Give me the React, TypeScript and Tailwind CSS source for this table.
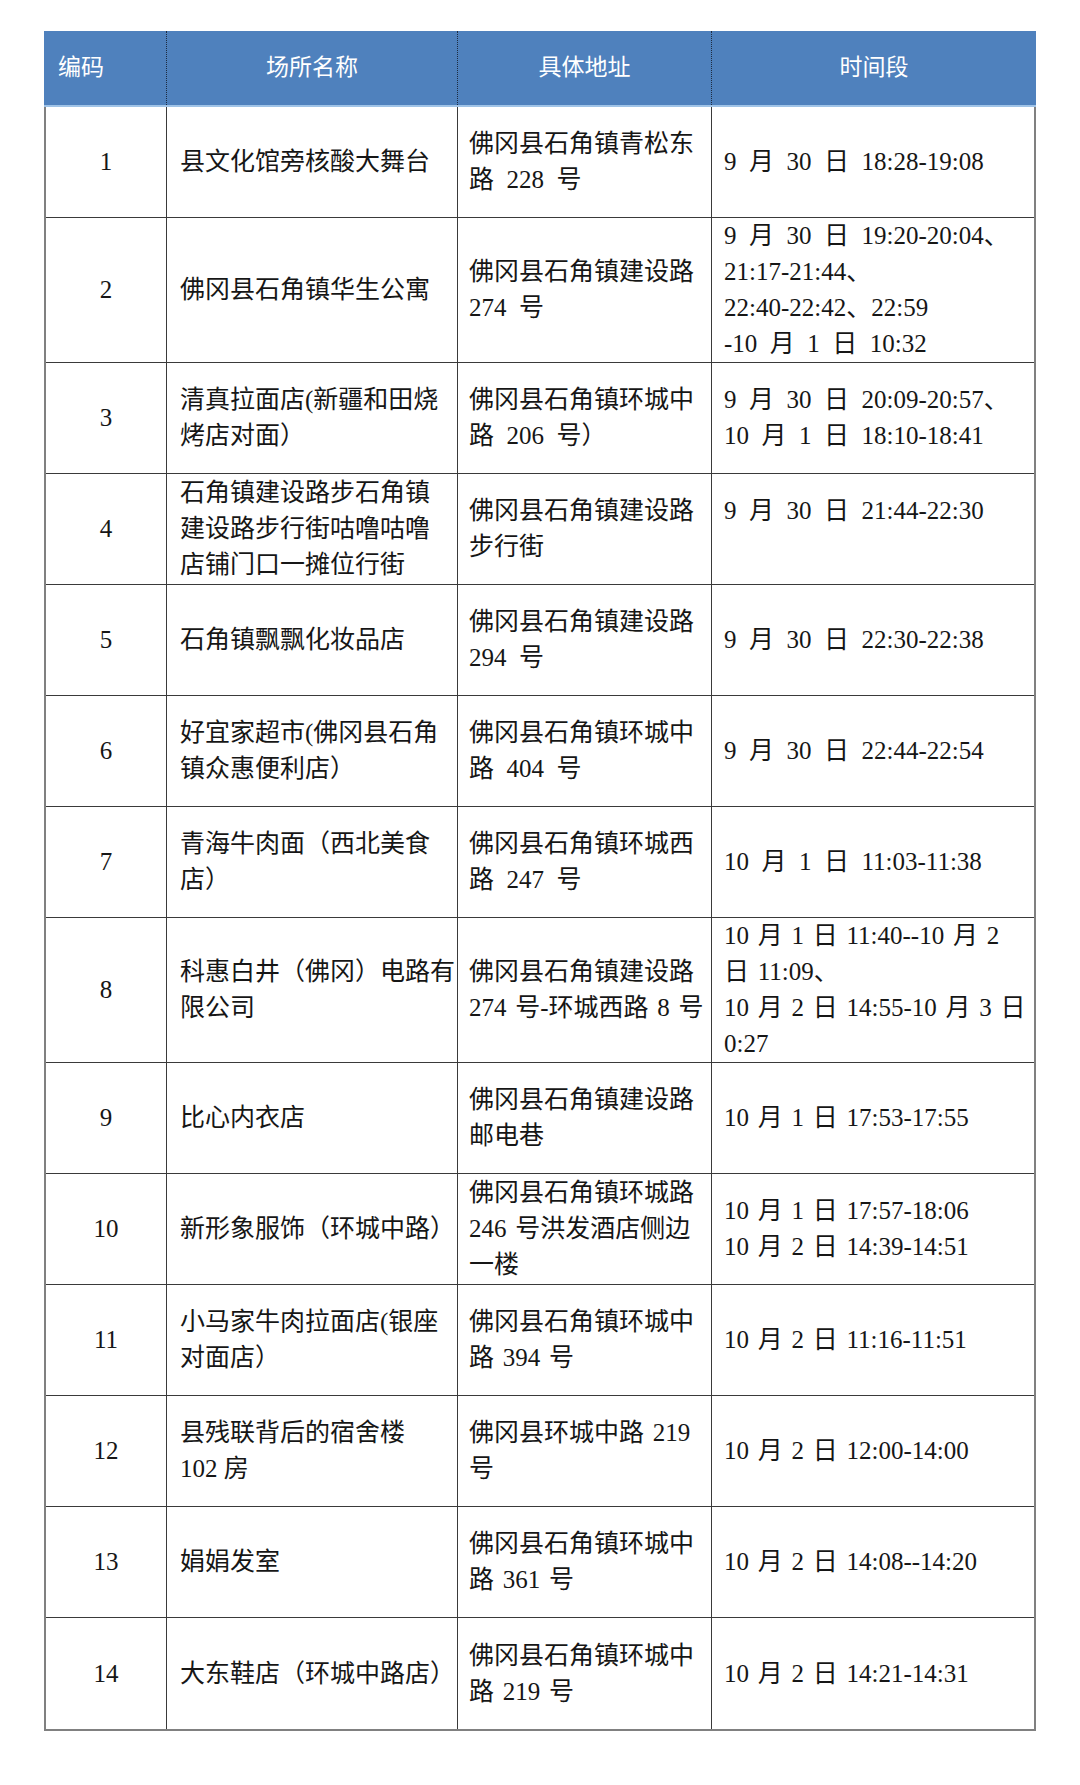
const rows = [
  {
    no: '1',
    name: ['县文化馆旁核酸大舞台'],
    addr: ['佛冈县石角镇青松东', '路 228 号'],
    time: ['9 月 30 日 18:28-19:08'],
    wide: true,
  },
  {
    no: '2',
    name: ['佛冈县石角镇华生公寓'],
    addr: ['佛冈县石角镇建设路', '274 号'],
    time: ['9 月 30 日 19:20-20:04、', '21:17-21:44、', '22:40-22:42、22:59', '-10 月 1 日 10:32'],
    wide: true,
  },
  {
    no: '3',
    name: ['清真拉面店(新疆和田烧', '烤店对面）'],
    addr: ['佛冈县石角镇环城中', '路 206 号）'],
    time: ['9 月 30 日 20:09-20:57、', '10 月 1 日 18:10-18:41'],
    wide: true,
  },
  {
    no: '4',
    name: ['石角镇建设路步石角镇', '建设路步行街咕噜咕噜', '店铺门口一摊位行街'],
    addr: ['佛冈县石角镇建设路', '步行街'],
    time: ['9 月 30 日 21:44-22:30', '\u00a0'],
    wide: true,
  },
  {
    no: '5',
    name: ['石角镇飘飘化妆品店'],
    addr: ['佛冈县石角镇建设路', '294 号'],
    time: ['9 月 30 日 22:30-22:38'],
    wide: true,
  },
  {
    no: '6',
    name: ['好宜家超市(佛冈县石角', '镇众惠便利店）'],
    addr: ['佛冈县石角镇环城中', '路 404 号'],
    time: ['9 月 30 日 22:44-22:54'],
    wide: true,
  },
  {
    no: '7',
    name: ['青海牛肉面（西北美食', '店）'],
    addr: ['佛冈县石角镇环城西', '路 247 号'],
    time: ['10 月 1 日 11:03-11:38'],
    wide: true,
  },
  {
    no: '8',
    name: ['科惠白井（佛冈）电路有', '限公司'],
    addr: ['佛冈县石角镇建设路', '274 号-环城西路 8 号'],
    time: ['10 月 1 日 11:40--10 月 2', '日 11:09、', '10 月 2 日 14:55-10 月 3 日', '0:27'],
    wide: false,
  },
  {
    no: '9',
    name: ['比心内衣店'],
    addr: ['佛冈县石角镇建设路', '邮电巷'],
    time: ['10 月 1 日 17:53-17:55'],
    wide: false,
  },
  {
    no: '10',
    name: ['新形象服饰（环城中路）'],
    addr: ['佛冈县石角镇环城路', '246 号洪发酒店侧边', '一楼'],
    time: ['10 月 1 日 17:57-18:06', '10 月 2 日 14:39-14:51'],
    wide: false,
  },
  {
    no: '11',
    name: ['小马家牛肉拉面店(银座', '对面店）'],
    addr: ['佛冈县石角镇环城中', '路 394 号'],
    time: ['10 月 2 日 11:16-11:51'],
    wide: false,
  },
  {
    no: '12',
    name: ['县残联背后的宿舍楼', '102 房'],
    addr: ['佛冈县环城中路 219', '号'],
    time: ['10 月 2 日 12:00-14:00'],
    wide: false,
  },
  {
    no: '13',
    name: ['娟娟发室'],
    addr: ['佛冈县石角镇环城中', '路 361 号'],
    time: ['10 月 2 日 14:08--14:20'],
    wide: false,
  },
  {
    no: '14',
    name: ['大东鞋店（环城中路店）'],
    addr: ['佛冈县石角镇环城中', '路 219 号'],
    time: ['10 月 2 日 14:21-14:31'],
    wide: false,
  },
];

function Lines({ lines }: { lines: string[] }) {
  return (
    <div className="flex flex-col whitespace-nowrap">
      {lines.map((l, i) => (
        <span key={i}>{l}</span>
      ))}
    </div>
  );
}

export default function App() {
  return (
    <div
      className="min-h-[1785px] bg-white pt-[31px] text-[#161616]"
      style={{ fontFamily: '"Liberation Serif", "Noto Sans CJK SC", serif' }}
    >
      <div className="ml-[44px] w-[992px]">
        {/* header */}
        <div className="grid h-[76px] grid-cols-[123px_291px_254px_324px] border-b-2 border-[#9fc3e7] bg-[#4f81bd] text-[23px] text-white">
          <div className="flex items-center border-r border-dotted border-[#1d2b40] pl-[14px]">编码</div>
          <div className="flex items-center justify-center border-r border-dotted border-[#1d2b40]">场所名称</div>
          <div className="flex items-center justify-center border-r border-dotted border-[#1d2b40]">具体地址</div>
          <div className="flex items-center justify-center">时间段</div>
        </div>

        {/* body */}
        <div className="border-x-2 border-b-2 border-[#808080] text-[25px] leading-[36px]">
          {rows.map((r, i) => (
            <div
              key={r.no}
              className={
                'grid min-h-[111px] grid-cols-[121px_291px_254px_322px] ' +
                (i < rows.length - 1 ? 'border-b border-[#3a3a3a]' : '')
              }
            >
              <div className="flex items-center justify-center border-r border-[#3a3a3a]">{r.no}</div>
              <div className="flex items-center border-r border-[#3a3a3a] pl-[13px]">
                <Lines lines={r.name} />
              </div>
              <div className={'flex items-center border-r border-[#3a3a3a] pl-[11px] ' + (r.wide ? '[word-spacing:0.25em]' : '[word-spacing:0.1em]')}>
                <Lines lines={r.addr} />
              </div>
              <div className={'flex items-center pl-[12px] ' + (r.wide ? '[word-spacing:0.25em]' : '[word-spacing:0.1em]')}>
                <Lines lines={r.time} />
              </div>
            </div>
          ))}
        </div>
      </div>
    </div>
  );
}
